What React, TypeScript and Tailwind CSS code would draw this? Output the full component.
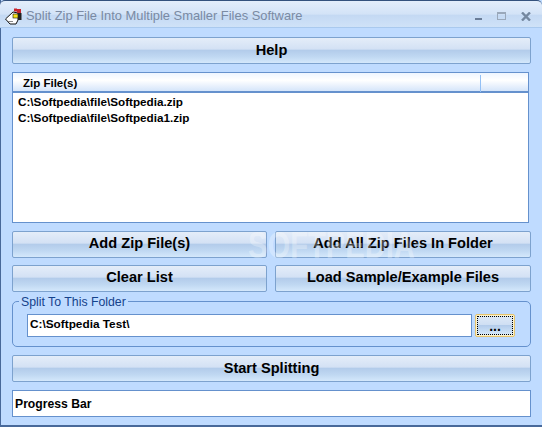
const ui = { fontFamily: '"Liberation Sans", Arial, sans-serif' };

function Btn({ label, className = '' }: { label?: string; className?: string }) {
  return (
    <div
      className={`h-[27px] flex items-center justify-center rounded-[2px] border border-[#7da2ce] bg-[linear-gradient(#e4edf9_0%,#d3e1f4_45%,#b2cbea_48%,#c0d8f2_75%,#d4e8fb_100%)] text-[14.6px] font-bold text-black ${className}`}
    >
      {label}
    </div>
  );
}

// little chicken head used as the program icon
function AppIcon() {
  return (
    <svg width="17" height="17" viewBox="0 0 17 17" className="shrink-0">
      <path d="M0.5 11 L8 4 L13 5 L13 12 L11 16 L5 16 Z" fill="#fff" stroke="#111" strokeWidth="1" />
      <rect x="9" y="0.5" width="3" height="3" fill="#c8242b" />
      <rect x="12" y="1" width="4" height="4" fill="#c8242b" />
      <rect x="8" y="6" width="5" height="4" fill="#f4e21c" stroke="#111" strokeWidth="0.6" />
      <rect x="13" y="5" width="3.5" height="7" fill="#222" />
      <rect x="3" y="13" width="5" height="1" fill="#888" />
    </svg>
  );
}

export default function App() {
  return (
    <div style={ui} className="relative w-[542px] h-[427px] overflow-hidden flex flex-col bg-[#bfdbff] pl-[4px] pr-[4px] pb-[4px] shadow-[inset_1px_0_0_0_#48699a,inset_0_-2px_0_0_#48699a]">
      <div className="-mx-[4px] h-[28px] shrink-0 flex items-center pt-[4px] pl-[5px] pr-[10px] rounded-t-[5px] border-b border-[#a9c9ee] bg-[linear-gradient(#e3eefb_0%,#d3e3f7_50%,#c4d9f3_55%,#cfe2f8_100%)] border-t border-t-[#34527d]">
        <AppIcon />
        <span className="ml-[4px] text-[12.9px] text-[#7a8aa3]">Split Zip File Into Multiple Smaller Files Software</span>
        <div className="ml-auto flex items-center gap-[15px] pr-[1px]">
          <div className="w-[7px] h-[2px] mt-[5px] bg-[#6a7d98]" />
          <div className="w-[9px] h-[8px] border border-[#9aa8ba] border-t-[2px]" />
          <svg width="10" height="9" viewBox="0 0 10 9">
            <path d="M1 0.5 L9 8.5 M9 0.5 L1 8.5" stroke="#74879f" strokeWidth="2.4" />
          </svg>
        </div>
      </div>

      <div className="flex-1 flex flex-col pt-[9px] pl-[8px] pr-[7px] pb-[3px] gap-[8px]">
        <Btn label="Help" className="h-[26px]" />

        <div className="h-[151px] mr-[2px] flex flex-col border border-[#6591cd] bg-white">
          <div className="h-[20px] shrink-0 flex items-center pt-[3px] border-b-2 border-[#6591cd] bg-[linear-gradient(#eef5ff,#fff_40%,#d5e5fa)] text-[11.5px] font-bold text-black">
            <span className="pl-[10px] w-[468px] border-r border-[#93c0f5]">Zip File(s)</span>
          </div>
          <div className="pl-[5px] pt-[1px] text-[11.7px] leading-[16px] font-bold text-black">
            <div>C:\Softpedia\file\Softpedia.zip</div>
            <div>C:\Softpedia\file\Softpedia1.zip</div>
          </div>
        </div>

        <div className="flex flex-col gap-[7px]">
          <div className="flex gap-[8px]">
            <Btn label="Add Zip File(s)" className="w-[255px] pb-[2px]" />
            <Btn label="Add All Zip Files In Folder" className="w-[256px] pb-[2px]" />
          </div>
          <div className="flex gap-[8px]">
            <Btn label="Clear List" className="w-[255px] pb-[2px]" />
            <Btn label="Load Sample/Example Files" className="w-[256px] pb-[2px]" />
          </div>
        </div>

        <div className="relative h-[46px] mt-[1px] flex items-center gap-[3px] pl-[14px] pt-[3px] rounded-[5px] border border-[#6591cd]">
          <span className="absolute -top-[7px] left-[6px] px-[2px] bg-[#bfdbff] text-[12.3px] leading-[14px] text-[#15428b]">Split To This Folder</span>
          <div className="w-[445px] h-[23px] flex items-center pl-[2px] pb-[1px] border border-[#6591cd] bg-white text-[11.8px] font-bold text-black">C:\Softpedia Test\</div>
          <div className="w-[40px] h-[23px] p-[1px] rounded-[2px] border border-[#e5c36f] bg-[#fdf3c9]">
            <div className="h-full flex items-center justify-center pt-[2px] border border-dotted border-black bg-[linear-gradient(#dce8f7_0%,#cfdff3_45%,#b2cbea_48%,#d2e6fa_100%)] text-[14px] font-bold text-black">...</div>
          </div>
        </div>

        <Btn label="Start Splitting" className="h-[27px]" />

        <div className="h-[27px] flex items-center pl-[2px] pt-[1px] border border-[#6591cd] bg-white text-[12.2px] font-bold text-black">Progress Bar</div>
      </div>

      <div className="absolute left-[248px] top-[226px] origin-left scale-x-[0.81] text-[36px] leading-[40px] font-bold text-white/30 whitespace-nowrap">
        SOFTPEDIA<span className="align-top text-[9px] font-normal">®</span>
      </div>
    </div>
  );
}
